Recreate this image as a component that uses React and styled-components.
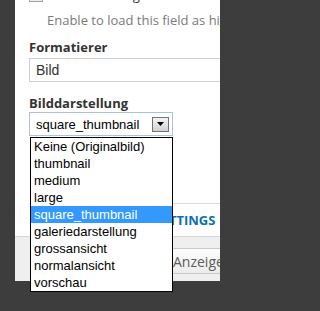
import React from 'react';
import styled, { createGlobalStyle } from 'styled-components';

const Global = createGlobalStyle`
  html, body { margin: 0; padding: 0; background: #3d3d3d; }
  body { width: 220px; height: 311px; overflow: hidden; }
`;

const Page = styled.div`
  width: 220px;
  height: 311px;
  overflow: hidden;
  background: #3d3d3d;
  display: flex;
  align-items: flex-start;
`;

const Dialog = styled.div`
  margin-left: 15px;
  width: 320px;
  flex: none;
  display: flex;
  flex-direction: column;
  background: #fff;
`;

const Body = styled.div`
  height: 236px;
  padding: 0 14px;
  box-sizing: border-box;
  display: flex;
  flex-direction: column;
  align-items: flex-start;
`;

const CheckRow = styled.label`
  margin-top: -16px;
  height: 18px;
  display: flex;
  align-items: flex-end;
  gap: 6px;
  font: 13px/14px "Open Sans", sans-serif;
  color: #333;
  white-space: nowrap;
`;

const Box = styled.span`
  width: 14px;
  height: 13px;
  box-sizing: border-box;
  border: 1px solid #a3a3a3;
  background: linear-gradient(#ffffff, #ececec);
  flex: none;
`;

const Description = styled.div`
  margin-top: 10px;
  padding-left: 18px;
  font: 13px/16px "Open Sans", sans-serif;
  color: #7a7a7a;
  white-space: nowrap;
`;

const Label = styled.div`
  margin-top: ${p => p.$mt}px;
  font: 700 13px/18px "Open Sans", sans-serif;
  color: #333;
  white-space: nowrap;
`;

const TextInput = styled.div`
  margin-top: 2px;
  width: 280px;
  height: 24px;
  box-sizing: border-box;
  border: 1px solid #cfcfcf;
  padding-left: 6px;
  display: flex;
  align-items: center;
  font: 14px "Liberation Sans", Arial, sans-serif;
  color: #333;
`;

const SelectWrap = styled.div`
  position: relative;
`;

const SelectBox = styled.div`
  width: 144px;
  height: 24px;
  box-sizing: border-box;
  border: 1px solid #a9c3da;
  background: #fff;
  display: flex;
  align-items: center;
  justify-content: space-between;
  padding: 0 3px 0 6px;
  font: 13px "Liberation Sans", Arial, sans-serif;
  color: #000;
`;

const ArrowButton = styled.span`
  width: 17px;
  height: 15px;
  box-sizing: border-box;
  border: 1px solid #737373;
  background: linear-gradient(#f4f4f4, #d2d2d2);
  display: flex;
  align-items: center;
  justify-content: center;
`;

const List = styled.ul`
  position: absolute;
  top: calc(100% + 1px);
  left: 1px;
  width: 143px;
  margin: 0;
  padding: 0;
  list-style: none;
  box-sizing: border-box;
  border: 1px solid #000;
  background: #fff;
  z-index: 10;
`;

const Option = styled.li`
  height: 17px;
  padding-left: 3px;
  font: 13px/17px "Liberation Sans", Arial, sans-serif;
  color: ${p => (p.$selected ? '#fff' : '#000')};
  background: ${p => (p.$selected ? '#3399ff' : 'transparent')};
  white-space: nowrap;
`;

const Fieldset = styled.div`
  margin-top: 67px;
  align-self: stretch;
  border-top: 1px solid #dcdcdc;
  padding: 7px 0 0 19px;
`;

const Legend = styled.span`
  font: 700 13px/18px "Open Sans", sans-serif;
  color: #0b6fb0;
  text-transform: uppercase;
  white-space: nowrap;
`;

const Footer = styled.div`
  height: 45px;
  box-sizing: border-box;
  border-top: 1px solid #d6d6d6;
  background: #efefef;
  padding: 11px 0 0 145px;
  display: flex;
  align-items: flex-start;
`;

const Button = styled.button`
  height: 26px;
  padding: 0 12px;
  border: 1px solid #c9c9c9;
  border-radius: 3px;
  background: linear-gradient(#fdfdfd, #ececec);
  font: 14px "Open Sans", sans-serif;
  color: #5c5c5c;
  white-space: nowrap;
`;

const options = [
  'Keine (Originalbild)',
  'thumbnail',
  'medium',
  'large',
  'square_thumbnail',
  'galeriedarstellung',
  'grossansicht',
  'normalansicht',
  'vorschau',
];

const Arrow = () => (
  <svg width="7" height="4" viewBox="0 0 7 4">
    <path d="M0 0 H7 L3.5 4 Z" fill="#000" />
  </svg>
);

export default function App() {
  const selected = 'square_thumbnail';
  return (
    <>
      <Global />
      <Page>
        <Dialog>
          <Body>
            <CheckRow>
              <Box />
              Von der Anzeige ausschließen
            </CheckRow>
            <Description>Enable to load this field as hidden.</Description>
            <Label $mt={10}>Formatierer</Label>
            <TextInput>Bild</TextInput>
            <Label $mt={12}>Bilddarstellung</Label>
            <SelectWrap>
              <SelectBox>
                {selected}
                <ArrowButton>
                  <Arrow />
                </ArrowButton>
              </SelectBox>
              <List>
                {options.map(o => (
                  <Option key={o} $selected={o === selected}>
                    {o}
                  </Option>
                ))}
              </List>
            </SelectWrap>
            <Fieldset>
              <Legend>Multiple field settings</Legend>
            </Fieldset>
          </Body>
          <Footer>
            <Button>Anzeige aktualisieren</Button>
          </Footer>
        </Dialog>
      </Page>
    </>
  );
}
